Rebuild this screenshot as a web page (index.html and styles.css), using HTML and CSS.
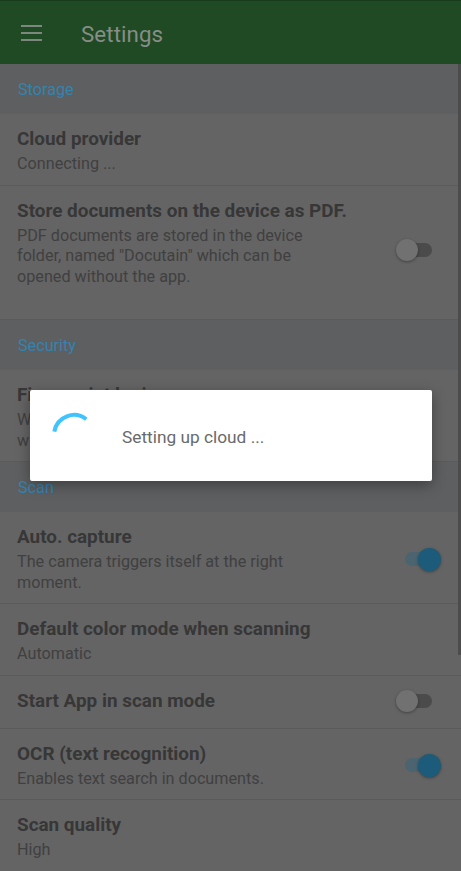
FILE: index.html
```html
<!DOCTYPE html>
<html lang="en">
<head>
  <meta charset="utf-8">
  <title>Settings</title>
  <link rel="stylesheet" href="styles.css">
</head>
<body>

<header class="toolbar">
  <svg class="menu-icon" width="22" height="16" viewBox="0 0 22 16">
    <rect x="0" y="0" width="21" height="2"/>
    <rect x="0" y="7" width="21" height="2"/>
    <rect x="0" y="14" width="21" height="2"/>
  </svg>
  <h1>Settings</h1>
</header>

<main class="prefs">
  <div class="category">Storage</div>

  <div class="pref">
    <div class="pref-text">
      <h3>Cloud provider</h3>
      <p>Connecting ...</p>
    </div>
  </div>

  <div class="pref pref-tall">
    <div class="pref-text">
      <h3>Store documents on the device as PDF.</h3>
      <p>PDF documents are stored in the device folder, named "Docutain" which can be opened without the app.</p>
    </div>
    <span class="switch"></span>
  </div>

  <div class="category">Security</div>

  <div class="pref">
    <div class="pref-text">
      <h3>Fingerprint login</h3>
      <p>When activated, the app can only be unlocked with your fingerprint.</p>
    </div>
    <span class="switch"></span>
  </div>

  <div class="category">Scan</div>

  <div class="pref">
    <div class="pref-text">
      <h3>Auto. capture</h3>
      <p>The camera triggers itself at the right moment.</p>
    </div>
    <span class="switch on"></span>
  </div>

  <div class="pref">
    <div class="pref-text">
      <h3>Default color mode when scanning</h3>
      <p>Automatic</p>
    </div>
  </div>

  <div class="pref pref-single">
    <div class="pref-text">
      <h3>Start App in scan mode</h3>
    </div>
    <span class="switch"></span>
  </div>

  <div class="pref">
    <div class="pref-text">
      <h3>OCR (text recognition)</h3>
      <p>Enables text search in documents.</p>
    </div>
    <span class="switch on"></span>
  </div>

  <div class="pref">
    <div class="pref-text">
      <h3>Scan quality</h3>
      <p>High</p>
    </div>
  </div>

  <div class="scrollbar"></div>
</main>

<!-- progress dialog while the cloud connection is made -->
<div class="dialog">
  <svg class="spinner" width="48" height="48" viewBox="0 0 48 48">
    <path d="M4.3 20.53 A20 20 0 0 1 36.31 8.24"/>
  </svg>
  <span class="dialog-msg">Setting up cloud ...</span>
</div>

</body>
</html>
```

FILE: styles.css
```css
body {
  margin: 0;
  font-family: Roboto, "Noto Sans", sans-serif;
  background: #646464;
  width: 461px;
  height: 871px;
  overflow: hidden;
  position: relative;
}

/* app bar */
.toolbar {
  height: 63px;
  background-color: #1f4a24;
  border-top: 1px solid #183b1c;
  display: flex;
  align-items: center;
}

.menu-icon {
  margin-left: 21px;
  fill: #7c877d;
}

.toolbar h1 {
  margin: 3px 0 0 38px;
  font-size: 22.3px;
  font-weight: 400;
  color: #878d87;
  letter-spacing: 0.1px;
}

/* preference list */
.prefs {
  position: relative;
}

.category {
  height: 49px;
  line-height: 51px;
  padding: 0 18px;
  font-size: 16.2px;
  color: #3383b0;
  background: #5e5f61;
  border-bottom: 1px solid #56636b;
}

.pref {
  display: flex;
  align-items: center;
  padding: 13px 29px 10px 17px;
  border-bottom: 1px solid #5b5b5b;
}

.pref-tall {
  align-items: flex-start;
  padding-bottom: 32px;
}

.pref-tall .switch {
  margin-top: 44px;
}

.pref-single {
  padding-bottom: 15px;
}

.pref-text {
  flex: 1;
}

.pref h3 {
  margin: 0;
  font-size: 18.9px;
  line-height: 24px;
  font-weight: 700;
  color: #373737;
}

.pref p {
  margin: 3px 0 0;
  font-size: 16.2px;
  line-height: 20.5px;
  color: #404040;
  max-width: 330px;
}

/* on/off switch */
.switch {
  position: relative;
  width: 34px;
  height: 14px;
  border-radius: 7px;
  background: #4b4b4b;
  margin-left: 20px;
  flex-shrink: 0;
}

.switch::after {
  content: "";
  position: absolute;
  left: -2px;
  top: -4px;
  width: 22px;
  height: 22px;
  border-radius: 50%;
  background: #717171;
  box-shadow: 0 1px 3px rgba(0, 0, 0, 0.35);
}

.switch.on {
  width: 31px;
  background: #4b6470;
  margin-right: -4px;
}

.switch.on::after {
  left: auto;
  right: -5px;
  top: -4px;
  width: 23px;
  height: 23px;
  background: #1c5b7a;
}

.scrollbar {
  position: absolute;
  top: 0;
  right: 0;
  width: 3px;
  height: 591px;
  background: #4c4c4c;
}

/* dialog */
.dialog {
  position: absolute;
  left: 30px;
  top: 390px;
  width: 402px;
  height: 91px;
  background: #fff;
  border-radius: 2px;
  box-shadow: 0 4px 14px rgba(0, 0, 0, 0.35);
  display: flex;
  align-items: center;
}

.spinner {
  margin: -2px 0 0 20px;
  fill: none;
  stroke: #40c4ff;
  stroke-width: 4;
}

.dialog-msg {
  margin-left: 24px;
  margin-top: 3px;
  font-size: 17.3px;
  color: #6a6a6a;
}
```
